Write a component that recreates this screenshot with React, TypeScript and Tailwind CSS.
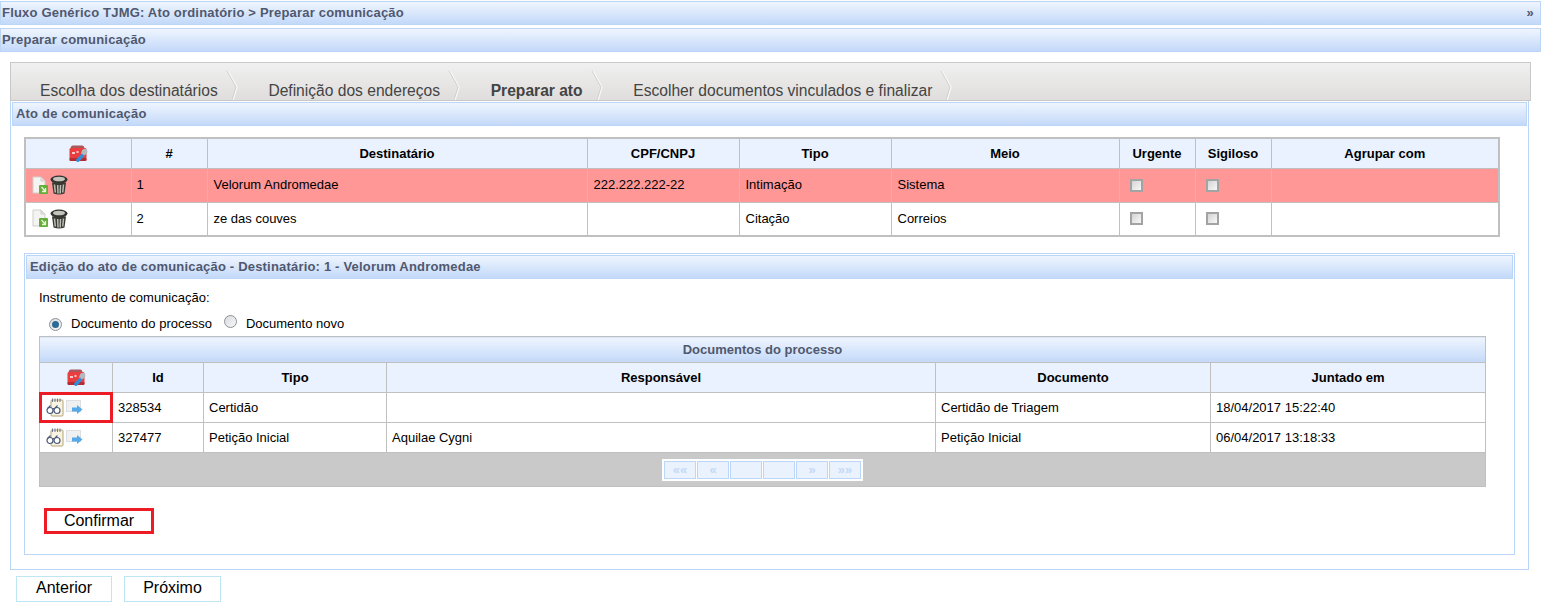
import React from "react";

const headerBar =
    "border border-[#bcd6f8] bg-gradient-to-b from-[#eff5fe] to-[#c3d9f9] font-bold text-[#50586f]";

const ToolsIcon: React.FC = () => (
    <svg width="19" height="18" viewBox="0 0 19 18" className="inline-block">
        <path d="M1.5 4 Q1.5 0.5 4 0.5 H13 Q15.5 0.5 15.5 4 Z" fill="#a9595c" />
        <rect x="0.5" y="3" width="17" height="12.5" rx="1.5" fill="#ea3d40" />
        <rect x="0.5" y="13" width="17" height="3" rx="1" fill="#b72c31" />
        <rect x="3" y="7" width="3" height="2" fill="#f6c9c9" />
        <rect x="7.5" y="6" width="2" height="2" fill="#f6c9c9" />
        <path d="M18 4.5 A3.4 3.4 0 0 0 12.5 7 L12 8.5 L14.5 11 L16.5 9.5 A3 3 0 0 0 18.5 7 Z" fill="#b5b8bd" />
        <path d="M13 8.5 L7 14.5 Q6.8 17.5 9.5 17 L15.5 11 Z" fill="#2f8fd8" />
    </svg>
);

const DocGreenIcon: React.FC = () => (
    <svg width="16" height="19" viewBox="0 0 16 19">
        <path d="M1 1 H9 L13 5 V17 H1 Z" fill="#f4f4f2" stroke="#cfd0cc" />
        <path d="M9 1 V5 H13" fill="#dfdfdc" stroke="#cfd0cc" />
        <rect x="7" y="9" width="9" height="9" rx="1" fill="#66ad3c" />
        <path d="M9.5 11 L13.5 15.5 M13.5 12 V15.5 H10" fill="none" stroke="#e9f6d9" strokeWidth="1.3" />
    </svg>
);

const TrashIcon: React.FC = () => (
    <svg width="18" height="20" viewBox="0 0 18 20">
        <ellipse cx="9" cy="4.6" rx="8.5" ry="4" fill="#33332f" />
        <ellipse cx="9" cy="4" rx="6" ry="2.3" fill="#c4c4bc" />
        <path d="M2 7.5 H16 L14.5 18.5 Q9 20.5 3.5 18.5 Z" fill="#3a3a35" />
        <path d="M4.5 9.5 L5.3 17.5 M7.7 10 L8 18.5 M10.5 10 L10.2 18.5 M13.5 9.5 L12.7 17.5" stroke="#bdbdb5" strokeWidth="1.5" />
    </svg>
);

const NotebookIcon: React.FC = () => (
    <svg width="18" height="19" viewBox="0 0 18 19">
        <rect x="5" y="2" width="12" height="16" rx="1" fill="#f8f3e2" stroke="#b3a577" />
        <path d="M6.5 0.5 V4 M9 0.5 V4 M11.5 0.5 V4 M14 0.5 V4" stroke="#6b7993" />
        <circle cx="4" cy="12.5" r="3" fill="#fff" stroke="#4a5a78" strokeWidth="1.2" />
        <circle cx="11" cy="12.5" r="3" fill="#fff" stroke="#4a5a78" strokeWidth="1.2" />
        <path d="M6.5 11 Q7.5 10 8.5 11 M1.5 10.5 L4.5 7.5 M9 10 L11.5 7.5" fill="none" stroke="#4a5a78" strokeWidth="1.1" />
    </svg>
);

const SendIcon: React.FC = () => (
    <svg width="17" height="15" viewBox="0 0 17 15">
        <rect x="0.5" y="0.5" width="14" height="11" fill="#eef0f2" stroke="#dcdee0" />
        <path d="M6 7.5 H11 V5 L16.5 9.5 L11 14 V11.5 H6 Z" fill="#55a9e8" />
    </svg>
);

const CheckBox: React.FC = () => (
    <span className="block size-[13px] border-2 border-[#a3a3a3] bg-gradient-to-br from-[#d4d4d4] to-[#f8f8f8]" />
);

const Radio: React.FC<{ checked?: boolean }> = ({ checked }) => (
    <span className="inline-flex size-[13px] items-center justify-center rounded-full border border-[#8d9196] bg-gradient-to-br from-[#d9dde0] to-[#f6f7f8]">
        {checked && <span className="size-[7px] rounded-full bg-[#2c6a94]" />}
    </span>
);

const th = "border border-[#c0c0c0] bg-[#e9f2fe] font-bold text-center text-black p-0";
const td = "border border-[#c0c0c0] px-[5px] py-0 text-black";
const tdWide = "border border-[#c0c0c0] px-[6px] py-0 text-black";

const destinatarios = [
    { n: "1", nome: "Velorum Andromedae", cpf: "222.222.222-22", tipo: "Intimação", meio: "Sistema", cor: "bg-[#ff9797]" },
    { n: "2", nome: "ze das couves", cpf: "", tipo: "Citação", meio: "Correios", cor: "bg-white" },
];

const documentos = [
    { id: "328534", tipo: "Certidão", resp: "", doc: "Certidão de Triagem", data: "18/04/2017 15:22:40", marcado: true },
    { id: "327477", tipo: "Petição Inicial", resp: "Aquilae Cygni", doc: "Petição Inicial", data: "06/04/2017 13:18:33", marcado: false },
];

const etapas = [
    { nome: "Escolha dos destinatários" },
    { nome: "Definição dos endereços" },
    { nome: "Preparar ato", ativo: true },
    { nome: "Escolher documentos vinculados e finalizar" },
];

const pager = ["««", "«", "", "", "»", "»»"];

export default function App() {
    return (
        <div className="h-[602px] w-[1544px] overflow-hidden bg-white font-['Liberation_Sans',Arial,sans-serif] text-[13px] text-black">
            <div className={`mt-px flex h-[24px] w-[1541px] items-center justify-between pl-[1px] pr-[6px] tracking-[0.19px] ${headerBar}`}>
                <span>Fluxo Genérico TJMG: Ato ordinatório &gt; Preparar comunicação</span>
                <span>»</span>
            </div>
            <div className={`mt-[3px] flex h-[24px] w-[1541px] items-center pl-[1px] tracking-[0.19px] ${headerBar}`}>
                Preparar comunicação
            </div>

            <div className="ml-[10px] mt-[10px] w-[1521px]">
                <div className="flex h-[39px] items-end border border-[#c8c8c8] bg-gradient-to-b from-[#f0f0f0] to-[#dfdedc] pl-[29px]">
                    {etapas.map((e) => (
                        <div key={e.nome} className="mr-[30.7px] flex shrink-0 items-end">
                            <span className={`text-[15.6px] leading-[18px] text-[#444] ${e.ativo ? "font-bold" : ""}`}>
                                {e.nome}
                            </span>
                            <svg width="12" height="29" viewBox="0 0 12 29" className="ml-[8px]">
                                <path d="M2 0 L11 16 L7 29" fill="none" stroke="#f8f8f8" strokeWidth="1.5" />
                                <path d="M1 0 L10 16 L6 29" fill="none" stroke="#d0d0d0" />
                            </svg>
                        </div>
                    ))}
                </div>

                <div className="h-[469px] w-[1519px] border border-t-0 border-[#bcd6f8] px-px pt-px">
                    <div className={`flex h-[24px] w-[1515px] items-center pl-[3px] tracking-[0.19px] ${headerBar}`}>
                        Ato de comunicação
                    </div>

                    <table className="ml-[12px] mt-[11px] w-[1476px] table-fixed border-collapse border-2 border-[#c0c0c0]">
                        <colgroup>
                            <col className="w-[106px]" />
                            <col className="w-[76px]" />
                            <col className="w-[380px]" />
                            <col className="w-[152px]" />
                            <col className="w-[152px]" />
                            <col className="w-[228px]" />
                            <col className="w-[76px]" />
                            <col className="w-[76px]" />
                            <col />
                        </colgroup>
                        <thead>
                            <tr className="h-[30px]">
                                <th className={th}><ToolsIcon /></th>
                                <th className={th}>#</th>
                                <th className={th}>Destinatário</th>
                                <th className={th}>CPF/CNPJ</th>
                                <th className={th}>Tipo</th>
                                <th className={th}>Meio</th>
                                <th className={th}>Urgente</th>
                                <th className={th}>Sigiloso</th>
                                <th className={th}>Agrupar com</th>
                            </tr>
                        </thead>
                        <tbody>
                            {destinatarios.map((d) => (
                                <tr key={d.n} className={`h-[34px] ${d.cor}`}>
                                    <td className={td}>
                                        <div className="flex items-center gap-[2px] pl-[1px]">
                                            <DocGreenIcon />
                                            <TrashIcon />
                                        </div>
                                    </td>
                                    <td className={td}>{d.n}</td>
                                    <td className={tdWide}>{d.nome}</td>
                                    <td className={tdWide}>{d.cpf}</td>
                                    <td className={tdWide}>{d.tipo}</td>
                                    <td className={tdWide}>{d.meio}</td>
                                    <td className={`${td} !pl-[10px]`}><CheckBox /></td>
                                    <td className={`${td} !pl-[10px]`}><CheckBox /></td>
                                    <td className={td}></td>
                                </tr>
                            ))}
                        </tbody>
                    </table>

                    <div className="ml-[12px] mt-[16px] h-[302px] w-[1491px] border border-[#bcd6f8] px-px pt-px">
                        <div className={`flex h-[24px] w-[1487px] items-center pl-[3px] tracking-[0.19px] ${headerBar}`}>
                            Edição do ato de comunicação - Destinatário: 1 - Velorum Andromedae
                        </div>

                        <p className="ml-[13px] mt-[12px] leading-[14px]">Instrumento de comunicação:</p>

                        <div className="ml-[23px] mt-[12px] flex h-[14px] items-center">
                            <Radio checked />
                            <span className="ml-[9px]">Documento do processo</span>
                            <span className="ml-[12px]"><Radio /></span>
                            <span className="ml-[9px]">Documento novo</span>
                        </div>

                        <table className="ml-[13px] mt-[5px] w-[1447px] table-fixed border-collapse border border-[#c0c0c0]">
                            <colgroup>
                                <col className="w-[73px]" />
                                <col className="w-[91px]" />
                                <col className="w-[183px]" />
                                <col className="w-[549px]" />
                                <col className="w-[275px]" />
                                <col />
                            </colgroup>
                            <thead>
                                <tr className="h-[26px]">
                                    <th colSpan={6} className={`border border-[#c0c0c0] p-0 text-center ${headerBar}`}>
                                        Documentos do processo
                                    </th>
                                </tr>
                                <tr className="h-[30px]">
                                    <th className={th}><ToolsIcon /></th>
                                    <th className={th}>Id</th>
                                    <th className={th}>Tipo</th>
                                    <th className={th}>Responsável</th>
                                    <th className={th}>Documento</th>
                                    <th className={th}>Juntado em</th>
                                </tr>
                            </thead>
                            <tbody>
                                {documentos.map((d) => (
                                    <tr key={d.id} className="h-[30px]">
                                        <td className={td + " relative !px-0"}>
                                            <div className="flex items-center gap-[2px] pl-[6px]">
                                                <NotebookIcon />
                                                <SendIcon />
                                            </div>
                                            {d.marcado && (
                                                <div className="absolute -bottom-px -left-px -top-px -right-px border-[3px] border-[#ed1c24]" />
                                            )}
                                        </td>
                                        <td className={td}>{d.id}</td>
                                        <td className={td}>{d.tipo}</td>
                                        <td className={td}>{d.resp}</td>
                                        <td className={td}>{d.doc}</td>
                                        <td className={td}>{d.data}</td>
                                    </tr>
                                ))}
                            </tbody>
                            <tfoot>
                                <tr className="h-[34px]">
                                    <td colSpan={6} className="border border-[#c0c0c0] bg-[#c9c9c9] p-0">
                                        <div className="flex justify-center">
                                            <div className="flex gap-px border border-white bg-white p-px">
                                                {pager.map((p, i) => (
                                                    <span
                                                        key={i}
                                                        className="flex h-[18px] w-[32px] items-center justify-center border border-[#bcd6f8] bg-[#eaf2fd] text-[13px] font-bold text-[#c4d8f8]"
                                                    >
                                                        {p}
                                                    </span>
                                                ))}
                                            </div>
                                        </div>
                                    </td>
                                </tr>
                            </tfoot>
                        </table>

                        <button
                            type="button"
                            className="ml-[18px] mt-[21px] block h-[26px] w-[110px] border-[3px] border-[#ed1c24] bg-white text-[16px] leading-none text-black"
                        >
                            Confirmar
                        </button>
                    </div>
                </div>
            </div>

            <div className="ml-[16px] mt-[6px] flex gap-[12px]">
                <button type="button" className="h-[26px] w-[96px] border border-[#bde6f2] bg-white pb-[2px] text-[16px] leading-none text-black">
                    Anterior
                </button>
                <button type="button" className="h-[26px] w-[97px] border border-[#bde6f2] bg-white pb-[2px] text-[16px] leading-none text-black">
                    Próximo
                </button>
            </div>
        </div>
    );
}
